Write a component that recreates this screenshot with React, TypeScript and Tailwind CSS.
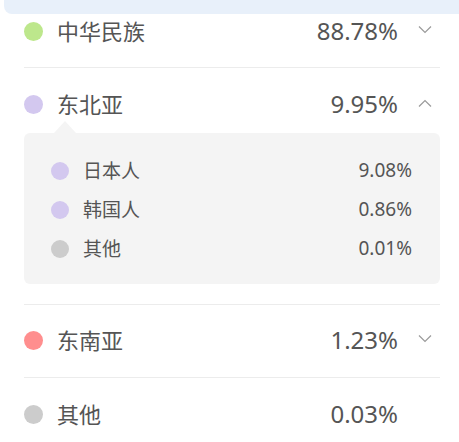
const cjk = { fontFamily: '"Noto Sans CJK SC", "Noto Sans", sans-serif' };
const num = { fontFamily: '"Noto Sans", "Noto Sans CJK SC", sans-serif' };

type Sub = { name: string; color: string; pct: string };

const subs: Sub[] = [
  { name: '日本人', color: 'bg-[#d3c8ef]', pct: '9.08%' },
  { name: '韩国人', color: 'bg-[#d3c8ef]', pct: '0.86%' },
  { name: '其他', color: 'bg-[#cccccc]', pct: '0.01%' },
];

const Chevron = ({ up }: { up?: boolean }) => (
  <svg width="14" height="8" viewBox="0 0 14 8" className="text-[#9a9a9a]">
    <path
      d={up ? 'M1 7.5 L7 1.5 L13 7.5' : 'M1 0.5 L7 6.5 L13 0.5'}
      fill="none"
      stroke="currentColor"
      strokeWidth="1.2"
    />
  </svg>
);

const Row = ({
  color,
  name,
  pct,
  chevron,
}: {
  color: string;
  name: string;
  pct: string;
  chevron?: 'up' | 'down';
}) => (
  <div className="flex items-center h-[32px]">
    <span className={`w-[19px] h-[19px] rounded-full ${color}`} />
    <span className="ml-[14px] text-[22px] leading-none text-[#555] -mt-[2px]" style={cjk}>
      {name}
    </span>
    <span className="ml-auto text-[24px] leading-none text-[#555]" style={num}>
      {pct}
    </span>
    <span className="w-[42px] pr-[8px] flex justify-end -mt-[3px]">
      {chevron && <Chevron up={chevron === 'up'} />}
    </span>
  </div>
);

export default function App() {
  return (
    <div className="w-[459px] h-[442px] overflow-hidden bg-white" style={cjk}>
      <div className="ml-[4px] h-[14px] bg-[#e8f0fa] rounded-bl-[8px]" />
      <div className="pl-[24px] pr-[19px]">
        <div className="pt-[1px] pb-[20px] border-b border-[#ececec]">
          <Row color="bg-[#bde78c]" name="中华民族" pct="88.78%" chevron="down" />
        </div>

        <div className="pt-[20px] pb-[20px] border-b border-[#ececec]">
          <Row color="bg-[#d3c8ef]" name="东北亚" pct="9.95%" chevron="up" />
          <div className="ml-[30px] w-0 h-0 border-x-[11px] border-x-transparent border-b-[12px] border-b-[#f4f4f4] mt-[1px]" />
          <div className="bg-[#f4f4f4] rounded-[6px] pl-[27px] pr-[28px] pt-[18px] pb-[16px]">
            {subs.map((s) => (
              <div key={s.name} className="flex items-center h-[39px]">
                <span className={`w-[18px] h-[18px] rounded-full ${s.color}`} />
                <span className="ml-[14px] text-[19px] leading-none text-[#555] -mt-[2px]">{s.name}</span>
                <span className="ml-auto text-[19px] leading-none text-[#555]" style={num}>
                  {s.pct}
                </span>
              </div>
            ))}
          </div>
        </div>

        <div className="h-[73px] pb-[2px] flex items-center border-b border-[#ececec]">
          <div className="flex-1">
            <Row color="bg-[#ff8e8e]" name="东南亚" pct="1.23%" chevron="down" />
          </div>
        </div>

        <div className="h-[74px] pb-[2px] flex items-center">
          <div className="flex-1">
            <Row color="bg-[#cccccc]" name="其他" pct="0.03%" />
          </div>
        </div>
      </div>
    </div>
  );
}
